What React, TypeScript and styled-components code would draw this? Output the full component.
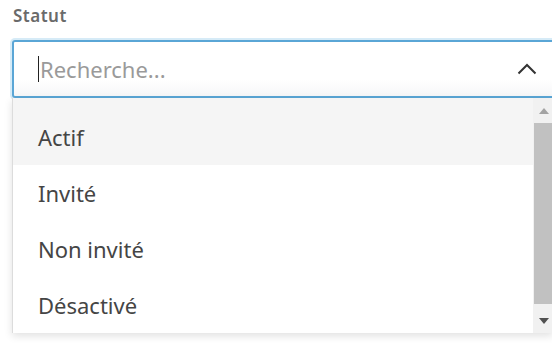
import React from "react";
import styled, { createGlobalStyle } from "styled-components";

const Global = createGlobalStyle`
  html, body { margin: 0; padding: 0; background: #ffffff; overflow: hidden; }
  body { font-family: "Noto Sans", "Open Sans", sans-serif; }
  * { box-sizing: border-box; }
`;

const Page = styled.div`
  width: 560px;
  height: 343px;
  padding: 6px 0 0 12px;
  display: flex;
  flex-direction: column;
`;

const Label = styled.div`
  height: 20px;
  line-height: 20px;
  margin-left: 1px;
  font-size: 17px;
  font-weight: 600;
  letter-spacing: 0.5px;
  color: #6a6a6a;
`;

const Field = styled.div`
  margin-top: 14px;
  width: 546px;
  height: 58px;
  border: 2px solid #5aa6d6;
  border-radius: 3px;
  box-shadow: 0 0 0 2px rgba(120, 190, 230, 0.3);
  background: linear-gradient(#ffffff 70%, #f6f7f8);
  display: flex;
  align-items: center;
  padding: 0 19px 0 24px;
`;

const Caret = styled.span`
  width: 1px;
  height: 26px;
  background: #222222;
  flex: none;
`;

const SearchInput = styled.input`
  flex: 1;
  border: none;
  outline: none;
  background: transparent;
  padding: 0 0 0 1px;
  font-family: inherit;
  font-size: 22px;
  color: #3c3c3c;
  caret-color: transparent;
  &::placeholder { color: #9a9a9a; }
`;

const Chevron = styled.svg`
  width: 20px;
  height: 12px;
  flex: none;
`;

const Panel = styled.div`
  width: 541px;
  height: 235px;
  background: #ffffff;
  border-left: 1px solid #dcdcdc;
  border-right: 1px solid #dcdcdc;
  box-shadow: 0 3px 8px rgba(0, 0, 0, 0.12);
  display: flex;
`;

const List = styled.ul`
  flex: 1;
  margin: 0;
  padding: 0;
  list-style: none;
`;

const Option = styled.li<{ $active?: boolean; $first?: boolean }>`
  height: ${(p) => (p.$first ? 67 : 56)}px;
  padding: ${(p) => (p.$first ? "11px" : "0")} 0 0 25px;
  line-height: 56px;
  font-size: 22px;
  color: #454545;
  background: ${(p) => (p.$active ? "#f5f5f5" : "#ffffff")};
`;

const Scrollbar = styled.div`
  width: 19px;
  background: #f1f1f1;
  display: flex;
  flex-direction: column;
`;

const ScrollButton = styled.div`
  height: 25px;
  display: flex;
  align-items: center;
  justify-content: center;
`;

const Arrow = styled.span<{ $down?: boolean }>`
  width: 0;
  height: 0;
  margin-left: 2px;
  border-left: 5.5px solid transparent;
  border-right: 5.5px solid transparent;
  ${(p) =>
    p.$down
      ? "border-top: 6px solid #505050;"
      : "border-bottom: 6px solid #a3a3a3;"}
`;

const Thumb = styled.div`
  height: 181px;
  margin-left: 1px;
  background: #c1c1c1;
`;

const Track = styled.div`
  flex: 1;
`;

const options = ["Actif", "Invité", "Non invité", "Désactivé"];

export default function App() {
  return (
    <>
      <Global />
      <Page>
        <Label>Statut</Label>
        <Field>
          <Caret />
          <SearchInput placeholder="Recherche..." readOnly />
          <Chevron viewBox="0 0 20 12">
            <polyline
              points="1.5,10.5 10,2 18.5,10.5"
              fill="none"
              stroke="#333333"
              strokeWidth="2"
            />
          </Chevron>
        </Field>
        <Panel>
          <List>
            {options.map((o, i) => (
              <Option key={o} $active={i === 0} $first={i === 0}>
                {o}
              </Option>
            ))}
          </List>
          <Scrollbar>
            <ScrollButton>
              <Arrow />
            </ScrollButton>
            <Thumb />
            <Track />
            <ScrollButton>
              <Arrow $down />
            </ScrollButton>
          </Scrollbar>
        </Panel>
      </Page>
    </>
  );
}
